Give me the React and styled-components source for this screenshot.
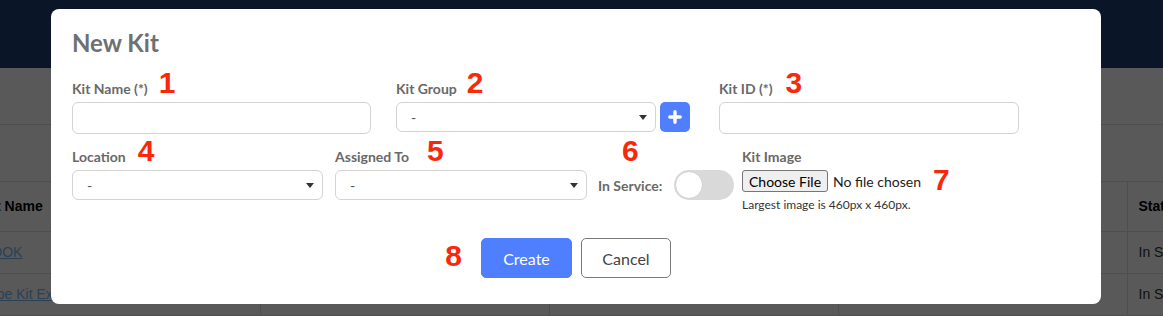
import styled, { createGlobalStyle } from "styled-components";

const GlobalStyle = createGlobalStyle`
  html, body {
    margin: 0;
    padding: 0;
  }
  body {
    background: #fff;
    overflow: hidden;
    font-family: "Liberation Sans", Arial, sans-serif;
  }
  * {
    box-sizing: border-box;
  }
`;

/* ---- page behind the dialog ---- */

const Page = styled.div`
  width: 1163px;
  height: 316px;
  overflow: hidden;
  background: #fff;
`;

const NavBar = styled.header`
  height: 68px;
  background: #203c73;
`;

const Strip = styled.div`
  height: 57px;
  border-bottom: 1px solid #dedede;
`;

const KitTable = styled.table`
  margin-left: -29px;
  border-collapse: collapse;
  table-layout: fixed;
  width: 1445px;
  font-size: 14px;
  color: #333;

  th,
  td {
    width: 289px;
    padding: 0 11px;
    text-align: left;
    border-right: 1px solid #dedede;
    border-bottom: 1px solid #dedede;
    white-space: nowrap;
    overflow: hidden;
  }
  th {
    height: 49px;
    color: #000;
    font-weight: 700;
  }
  td {
    height: 42px;
  }
  a {
    color: #7ab8f5;
    text-decoration: underline;
  }
`;

const Backdrop = styled.div`
  position: fixed;
  inset: 0;
  background: rgba(0, 0, 0, 0.65);
`;

/* ---- dialog ---- */

const Modal = styled.div`
  position: fixed;
  top: 9px;
  left: 51px;
  width: 1050px;
  background: #fff;
  border-radius: 8px;
  padding: 19px 21px 26px;
  font-family: Lato, "Open Sans", sans-serif;
`;

const Title = styled.h2`
  margin: 0;
  font-size: 24px;
  line-height: 29px;
  font-weight: 700;
  color: #707070;
`;

const FieldRow = styled.div`
  display: grid;
  grid-template-columns: ${(p) => p.$cols};
  align-items: start;
  margin-top: ${(p) => p.$mt}px;
`;

const Field = styled.div`
  display: flex;
  flex-direction: column;
`;

const LabelRow = styled.div`
  display: flex;
  align-items: flex-start;
  height: 17px;
  margin-bottom: 5px;
`;

const Label = styled.label`
  font-size: 14px;
  line-height: 17px;
  font-weight: 700;
  color: #696969;
  white-space: nowrap;
`;

const Marker = styled.span`
  position: relative;
  top: ${(p) => p.$top ?? -6}px;
  margin-left: ${(p) => p.$ml || 0}px;
  margin-right: ${(p) => p.$mr || 0}px;
  font-family: "Liberation Sans", Arial, sans-serif;
  font-size: 30px;
  line-height: ${(p) => p.$lh || "17px"};
  font-weight: 700;
  color: #f8290b;
`;

const TextInput = styled.input`
  width: ${(p) => p.$w}px;
  height: 32px;
  border: 1px solid #d3d3d3;
  border-radius: 6px;
  padding: 0 10px;
  font: 14px Lato, sans-serif;
  outline: none;
`;

const SelectBox = styled.div`
  width: ${(p) => p.$w}px;
  height: 30px;
  border: 1px solid #d3d3d3;
  border-radius: 6px;
  display: flex;
  align-items: center;
  justify-content: space-between;
  padding: 0 8px 0 14px;
  font-size: 14px;
  color: #555;
`;

const InputGroup = styled.div`
  display: flex;
  align-items: center;
  gap: 4px;
`;

const AddButton = styled.button`
  width: 30px;
  height: 30px;
  border: none;
  border-radius: 5px;
  background: #4f7efe;
  display: flex;
  align-items: center;
  justify-content: center;
  padding: 0;
`;

const ServiceRow = styled.div`
  display: flex;
  align-items: center;
  gap: 12px;
  height: 30px;
`;

const Toggle = styled.button`
  width: 60px;
  height: 30px;
  border: none;
  border-radius: 15px;
  background: #d9d9d9;
  display: flex;
  align-items: center;
  padding: 0 1px;
`;

const Knob = styled.span`
  width: 28px;
  height: 28px;
  border-radius: 50%;
  background: #fff;
  border: 1px solid #d0d0d0;
`;

const FileRow = styled.div`
  display: flex;
  align-items: center;
  height: 22px;
`;

const FileInput = styled.input`
  width: 190px;
  height: 22px;
  font: 14px Lato, sans-serif;
  color: #222;

  &::file-selector-button {
    font: inherit;
    height: 22px;
    padding: 0 6px;
    margin-right: 5px;
    border: 1px solid #767676;
    border-radius: 3px;
    background: #efefef;
    color: #000;
  }
`;

const Hint = styled.div`
  margin-top: 6px;
  font-size: 12px;
  line-height: 14px;
  color: #333;
  white-space: nowrap;
`;

const Actions = styled.div`
  display: grid;
  grid-template-columns: 1fr auto 1fr;
  align-items: center;
  margin-top: 26px;

  ${Marker} {
    justify-self: end;
  }
`;

const ActionButtons = styled.div`
  display: flex;
  gap: 9px;
`;

const Button = styled.button`
  width: ${(p) => p.$w}px;
  height: 40px;
  border-radius: 5px;
  font: 16px Lato, sans-serif;
  border: 1px solid ${(p) => (p.$primary ? "#4f7efe" : "#7a7a7a")};
  background: ${(p) => (p.$primary ? "#4f7efe" : "#fff")};
  color: ${(p) => (p.$primary ? "#fff" : "#444")};
`;

const Caret = () => (
  <svg width="8" height="5" viewBox="0 0 8 5">
    <path d="M0 0h8L4 5z" fill="#333" />
  </svg>
);

const PlusIcon = () => (
  <svg width="14" height="14" viewBox="0 0 14 14">
    <path d="M7 1.8v10.4M1.8 7h10.4" stroke="#fff" strokeWidth="3.4" strokeLinecap="round" />
  </svg>
);

function Select({ w }) {
  return (
    <SelectBox $w={w}>
      <span>-</span>
      <Caret />
    </SelectBox>
  );
}

export default function App() {
  return (
    <>
      <GlobalStyle />
      <Page>
        <NavBar />
        <Strip />
        <Strip />
        <KitTable>
          <thead>
            <tr>
              <th>Kit Name</th>
              <th>Kit ID</th>
              <th>Kit Group</th>
              <th>Location</th>
              <th>Status</th>
            </tr>
          </thead>
          <tbody>
            <tr>
              <td><a href="#">BOOK</a></td>
              <td>BK-01</td>
              <td>Books</td>
              <td>Main Office</td>
              <td>In Service</td>
            </tr>
            <tr>
              <td><a href="#">Tape Kit Example</a></td>
              <td>TK-02</td>
              <td>Tapes</td>
              <td>Main Office</td>
              <td>In Service</td>
            </tr>
          </tbody>
        </KitTable>
      </Page>

      <Backdrop />

      <Modal>
        <Title>New Kit</Title>

        <FieldRow $cols="324px 323px 1fr" $mt={23}>
          <Field>
            <LabelRow>
              <Label>Kit Name (*)</Label>
              <Marker $ml={11}>1</Marker>
            </LabelRow>
            <TextInput $w={299} />
          </Field>
          <Field>
            <LabelRow>
              <Label>Kit Group</Label>
              <Marker $ml={10}>2</Marker>
            </LabelRow>
            <InputGroup>
              <Select w={260} />
              <AddButton>
                <PlusIcon />
              </AddButton>
            </InputGroup>
          </Field>
          <Field>
            <LabelRow>
              <Label>Kit ID (*)</Label>
              <Marker $ml={13}>3</Marker>
            </LabelRow>
            <TextInput $w={300} />
          </Field>
        </FieldRow>

        <FieldRow $cols="263px 263px 144px 1fr" $mt={14}>
          <Field>
            <LabelRow>
              <Label>Location</Label>
              <Marker $ml={12}>4</Marker>
            </LabelRow>
            <Select w={251} />
          </Field>
          <Field>
            <LabelRow>
              <Label>Assigned To</Label>
              <Marker $ml={18}>5</Marker>
            </LabelRow>
            <Select w={252} />
          </Field>
          <Field>
            <LabelRow>
              <Marker $ml={24}>6</Marker>
            </LabelRow>
            <ServiceRow>
              <Label>In Service:</Label>
              <Toggle>
                <Knob />
              </Toggle>
            </ServiceRow>
          </Field>
          <Field>
            <LabelRow>
              <Label>Kit Image</Label>
            </LabelRow>
            <FileRow>
              <FileInput type="file" />
              <Marker $ml={1} $lh="30px" $top={-1}>7</Marker>
            </FileRow>
            <Hint>Largest image is 460px x 460px.</Hint>
          </Field>
        </FieldRow>

        <Actions>
          <Marker $mr={19} $lh="30px" $top={-2}>8</Marker>
          <ActionButtons>
            <Button $primary $w={91}>Create</Button>
            <Button $w={90}>Cancel</Button>
          </ActionButtons>
        </Actions>
      </Modal>
    </>
  );
}
